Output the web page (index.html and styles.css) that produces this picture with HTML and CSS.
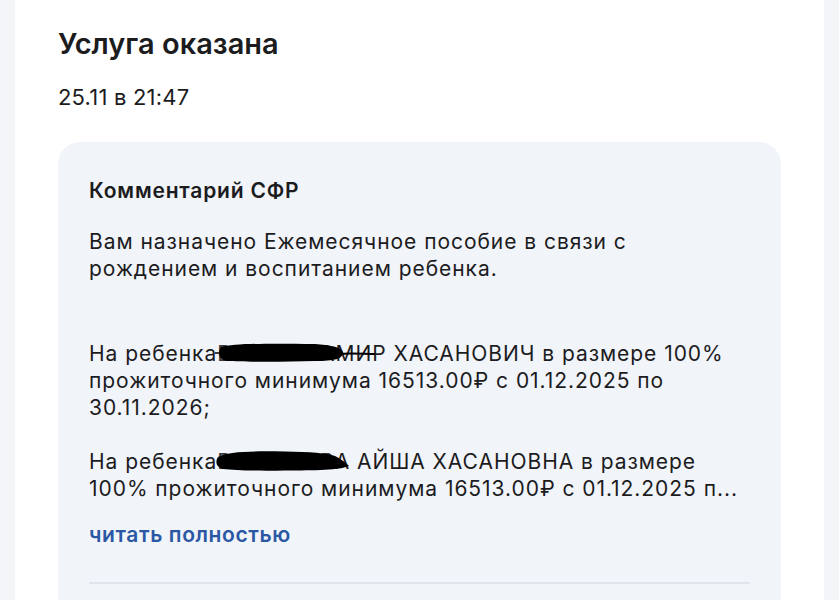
FILE: index.html
```html
<!DOCTYPE html>
<html>
<head>
  <title>Услуга оказана</title>
  <link rel="stylesheet" href="styles.css">
</head>
<body>
  <div class="card">
    <h1 class="status-title">Услуга оказана</h1>
    <div class="status-date">25.11 в 21:47</div>

    <div class="comment">
      <h2 class="comment-title">Комментарий СФР</h2>
      <p class="comment-text">Вам назначено Ежемесячное пособие в связи с<br>рождением и воспитанием ребенка.</p>

      <!-- names are blacked out by hand on the original -->
      <p class="comment-text gap">На ребенка<span class="hidden-name">ВВВВВВВ<svg class="marker" viewBox="0 0 160 20"><path d="M0 10 L12 10" stroke="#000" stroke-width="1.5" fill="none"/><path d="M6 4 C20 0 60 0.5 100 1 C115 2 126 4 128 9 C128 16 120 18 100 18 C70 19 30 19 12 18 C4 17 2 10 6 4 Z"/><path d="M122 11 C135 10 150 11 160 11" stroke="#000" stroke-width="2" fill="none"/></svg></span>АМИР ХАСАНОВИЧ в размере 100%<br>прожиточного минимума 16513.00₽ с 01.12.2025 по<br>30.11.2026;</p>
      <p class="comment-text">На ребенка<span class="hidden-name">ВВВВВВВВ<svg class="marker" viewBox="0 0 160 20"><path d="M3 6 C12 0 40 0 70 0.5 C95 1 112 2 120 5 C126 8 130 11 134 15 C125 19 100 19.5 70 19.5 C45 20 20 19.5 8 18 C1 16 0 11 3 6 Z"/></svg></span>А АЙША ХАСАНОВНА в размере<br>100% прожиточного минимума 16513.00₽ с 01.12.2025 п...</p>

      <a href="#" class="read-more">читать полностью</a>
      <div class="divider"></div>
    </div>
  </div>
</body>
</html>
```

FILE: styles.css
```css
/* page */
body {
  margin: 0;
  padding: 0 15px;
  background-color: #F4F5F9;
  font-family: Inter, "Noto Sans", sans-serif;
  color: #1C1C1E;
}

.card {
  background-color: #FFFFFF;
  padding: 26px 43px 0 43px;
  height: 600px;
  box-sizing: border-box;
  overflow: hidden;
}

.status-title {
  margin: 0;
  font-size: 29px;
  font-weight: 600;
  line-height: 36px;
  letter-spacing: 0;
}

.status-date {
  margin-top: 22px;
  font-size: 22px;
  line-height: 26px;
  letter-spacing: 0.2px;
}

.comment {
  margin-top: 32px;
  background-color: #F1F4F9;
  border-radius: 22px 22px 0 0;
  padding: 36px 31px 0 31px;
  height: 458px;
  box-sizing: border-box;
}

.comment-title {
  margin: 0;
  font-size: 21px;
  font-weight: 600;
  line-height: 26px;
  letter-spacing: 0.8px;
}

.comment-text {
  margin: 24px 0 0 0;
  font-size: 21px;
  line-height: 27px;
  letter-spacing: 0.95px;
}

.comment-text.gap {
  margin-top: 58px;
}

.comment-text + .comment-text:not(.gap) {
  margin-top: 27px;
}

.hidden-name {
  position: relative;
  color: #3A3A3A;
}

.marker {
  position: absolute;
  left: -2px;
  top: 2px;
  width: 160px;
  height: 20px;
  fill: #000000;
}

.read-more {
  display: block;
  margin-top: 20px;
  font-size: 21px;
  font-weight: 600;
  line-height: 26px;
  letter-spacing: 0.6px;
  color: #2B58A4;
  text-decoration: none;
}

.divider {
  margin-top: 34px;
  height: 2px;
  background-color: #E1E5EB;
}
```
